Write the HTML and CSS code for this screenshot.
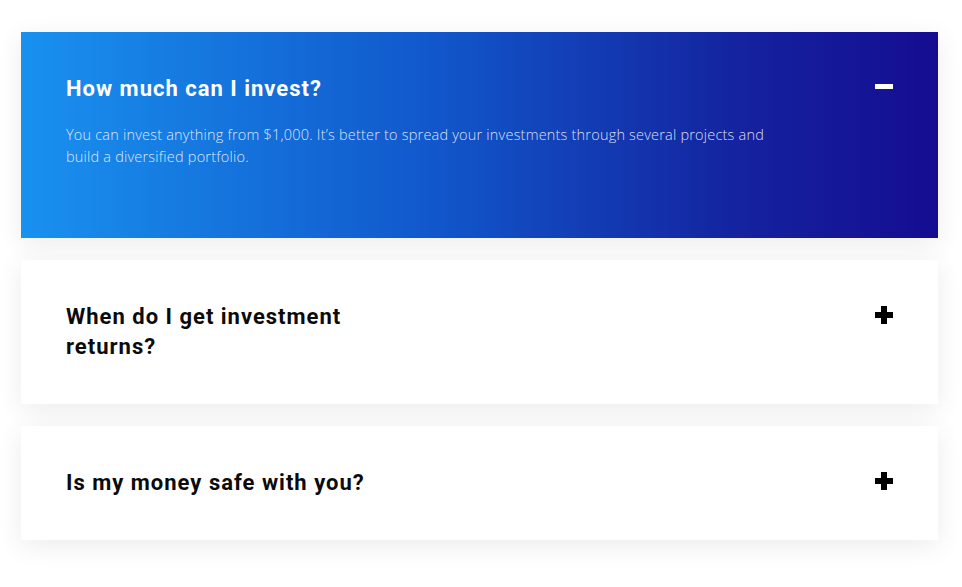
FILE: index.html
```html
<!DOCTYPE html>
<html lang="en">
<head>
<meta charset="utf-8">
<title>FAQ</title>
<link rel="stylesheet" href="styles.css">
</head>
<body>
<div class="faq">
  <div class="item open">
    <div class="head">
      <h3 class="q">How much can I invest?</h3>
      <span class="icon minus"></span>
    </div>
    <p class="a">You can invest anything from $1,000. It’s better to spread your investments through several projects and build a diversified portfolio.</p>
  </div>
  <div class="item">
    <div class="head">
      <h3 class="q">When do I get investment returns?</h3>
      <span class="icon plus"></span>
    </div>
  </div>
  <div class="item">
    <div class="head">
      <h3 class="q">Is my money safe with you?</h3>
      <span class="icon plus"></span>
    </div>
  </div>
</div>
</body>
</html>
```
FILE: styles.css
```css
html, body {
  margin: 0;
  padding: 0;
  background: #ffffff;
}
body {
  font-family: Roboto, "Liberation Sans", sans-serif;
  padding-bottom: 47px;
}
.faq {
  width: 917px;
  margin: 32px 0 0 21px;
  display: flex;
  flex-direction: column;
  gap: 22px;
}
.item {
  background: #ffffff;
  box-shadow: 0 6px 26px rgba(0, 0, 0, 0.08);
  padding: 42px 45px 42px 45px;
}
.item.open {
  background: linear-gradient(90deg, #1991ef 0%, #1157cb 45%, #14239f 78%, #150c92 100%);
  padding-bottom: 70px;
}
.head {
  display: flex;
  justify-content: space-between;
  align-items: flex-start;
}
.q {
  margin: 0;
  max-width: 340px;
  font-size: 22px;
  line-height: 30px;
  font-weight: 700;
  letter-spacing: 1px;
  color: #0b0b0b;
}
.open .q {
  color: #ffffff;
}
.icon {
  position: relative;
  width: 18px;
  height: 18px;
  margin-top: 4px;
}
.icon.minus::before {
  content: "";
  position: absolute;
  left: 0;
  top: 6px;
  width: 18px;
  height: 5px;
  background: #ffffff;
}
.icon.plus::before,
.icon.plus::after {
  content: "";
  position: absolute;
  background: #000000;
}
.icon.plus::before {
  left: 0;
  top: 6px;
  width: 18px;
  height: 6px;
}
.icon.plus::after {
  left: 6px;
  top: 0;
  width: 6px;
  height: 18px;
}
.a {
  margin: 20px 0 0 0;
  max-width: 712px;
  font-family: "Open Sans", sans-serif;
  font-weight: 300;
  font-size: 14.5px;
  letter-spacing: 0.2px;
  line-height: 22px;
  color: rgba(255, 255, 255, 0.85);
}
```
